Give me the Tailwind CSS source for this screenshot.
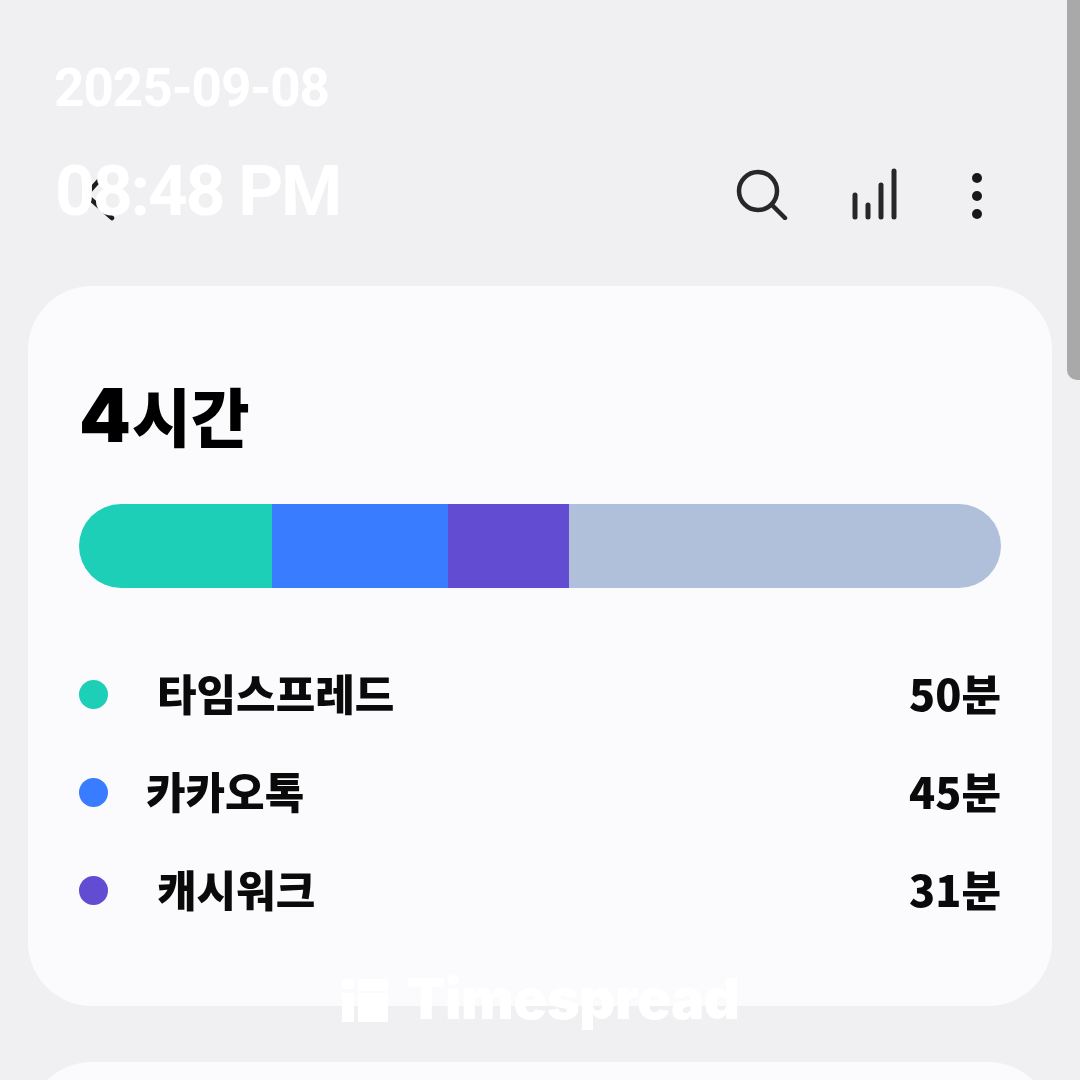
<!DOCTYPE html>
<html lang="ko">
<head>
  <meta charset="UTF-8" />
  <meta name="viewport" content="width=device-width, initial-scale=1" />
  <title>Timespread</title>
  <script src="https://cdn.jsdelivr.net/npm/@tailwindcss/browser@4"></script>
</head>
<body class="bg-[#f0f0f2] font-['Noto_Sans_CJK_KR','Noto_Sans',sans-serif] overflow-hidden">
  <div class="relative w-[1080px] h-[1080px] overflow-hidden blur-[0.7px]">

    <!-- Toolbar -->
    <div class="h-[286px] pl-[84px] pr-[102px] pt-[167px]">
      <div class="flex items-start justify-between">
        <svg class="mt-[3px]" width="34" height="54" viewBox="0 0 34 54" fill="none" stroke="#1c1c1f" stroke-width="4.5" stroke-linecap="round" stroke-linejoin="round">
          <path d="M18 7 L2 25 L28 48" />
        </svg>
        <div class="flex items-center gap-[64px]">
          <svg width="52" height="52" viewBox="0 0 52 52" fill="none" stroke="#27272a" stroke-width="4.5" stroke-linecap="round">
            <circle cx="22" cy="23" r="19" />
            <path d="M36 37 L49 50" />
          </svg>
          <svg width="48" height="54" viewBox="0 0 48 54" fill="none" stroke="#27272a" stroke-width="5" stroke-linecap="round">
            <path d="M3 28V50" />
            <path d="M16 38V50" />
            <path d="M29 18V50" />
            <path d="M42 4V50" />
          </svg>
          <div class="flex flex-col gap-[8px] mr-[-4px] ml-[8px] mt-[4px]">
            <span class="w-[10px] h-[10px] rounded-full bg-[#18181b]"></span>
            <span class="w-[10px] h-[10px] rounded-full bg-[#18181b]"></span>
            <span class="w-[10px] h-[10px] rounded-full bg-[#18181b]"></span>
          </div>
        </div>
      </div>
    </div>

    <!-- Usage card -->
    <div class="ml-[28px] w-[1024px] h-[720px] rounded-[64px] bg-[#fbfbfe] px-[51px] pt-[92px]">
      <div class="flex items-baseline h-[78px] font-black text-black leading-none">
        <span class="text-[74px] font-['Inter','Noto_Sans_CJK_KR',sans-serif]">4</span>
        <span class="text-[64px] font-black ml-[1px]">시간</span>
      </div>
      <div class="flex w-[922px] h-[84px] mt-[48px] rounded-full overflow-hidden">
        <div class="w-[193px] bg-[#1dcfb7]"></div>
        <div class="w-[176px] bg-[#397cff]"></div>
        <div class="w-[121px] bg-[#614cd2]"></div>
        <div class="flex-1 bg-[#b0bfda]"></div>
      </div>
      <div class="mt-[79px] flex flex-col gap-[48px] w-[922px] text-[#0a0a0a] font-black text-[43px] leading-[50px]">
        <div class="flex items-center justify-between">
          <div class="flex items-center"><span class="mt-[4px] w-[29px] h-[29px] rounded-full bg-[#1dcfb7]"></span><span class="ml-[49px]">타임스프레드</span></div>
          <span>50분</span>
        </div>
        <div class="flex items-center justify-between">
          <div class="flex items-center"><span class="mt-[4px] w-[29px] h-[29px] rounded-full bg-[#397cff]"></span><span class="ml-[38px]">카카오톡</span></div>
          <span>45분</span>
        </div>
        <div class="flex items-center justify-between">
          <div class="flex items-center"><span class="mt-[4px] w-[29px] h-[29px] rounded-full bg-[#614cd2]"></span><span class="ml-[49px]">캐시워크</span></div>
          <span>31분</span>
        </div>
      </div>
    </div>

    <!-- Next card, cut off -->
    <div class="ml-[28px] mt-[56px] w-[1024px] h-[200px] rounded-[64px] bg-[#fbfbfe]"></div>

    <!-- Scrollbar -->
    <div class="absolute right-0 top-0 w-[13px] h-[380px] rounded-bl-[10px] bg-[#a9a9a9]"></div>

    <!-- Date and time overlay -->
    <div class="absolute left-[54px] top-[57px] text-white font-['Roboto',sans-serif] font-bold text-[53px] leading-[62px] tracking-[-1px]">2025-09-08</div>
    <div class="absolute left-[55px] top-[149px] text-white font-['Roboto',sans-serif] font-bold text-[70px] leading-[84px] tracking-[-2.4px]">08:48 PM</div>

    <!-- Watermark -->
    <div class="absolute left-[342px] top-[979px] flex items-start">
      <div class="flex gap-[4px]">
        <div class="flex flex-col gap-[4px] w-[12px]">
          <span class="h-[10px] rounded-t-[4px] bg-white"></span>
          <span class="h-[29px] bg-white"></span>
        </div>
        <div class="flex flex-col gap-[2px] w-[30px]">
          <span class="h-[12px] bg-white"></span>
          <span class="h-[29px] bg-white"></span>
        </div>
      </div>
      <span class="ml-[19px] mt-[-12px] font-['Inter',sans-serif] font-black text-[56px] leading-[64px] tracking-[-0.5px] text-white">Timespread</span>
    </div>
  </div>
</body>
</html>
